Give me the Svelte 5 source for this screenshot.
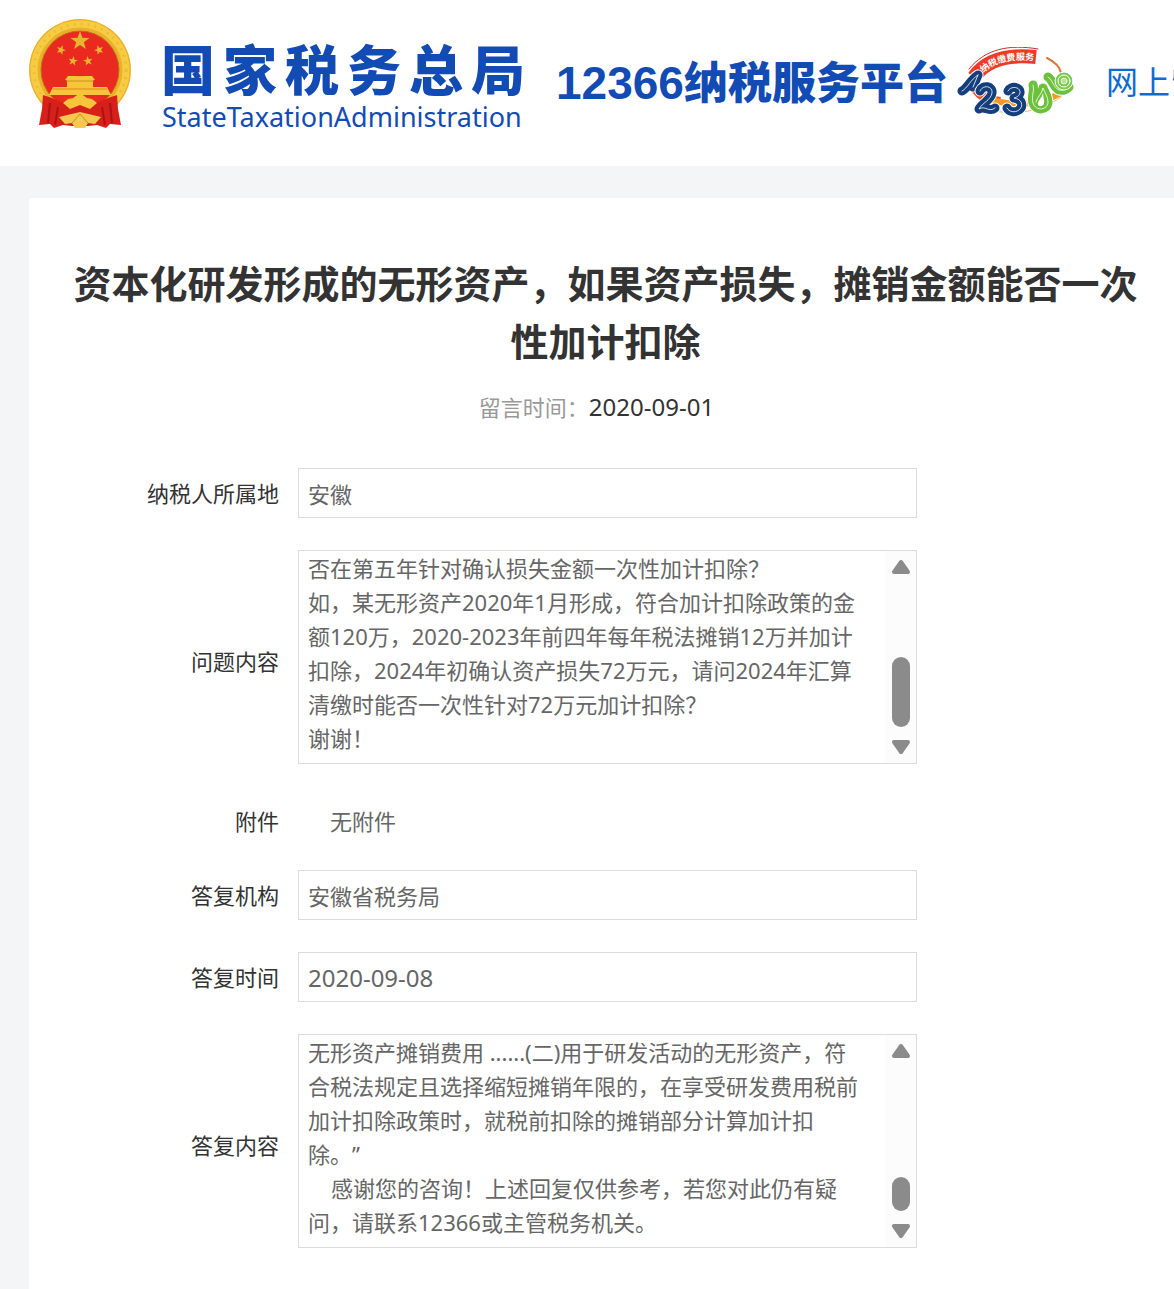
<script>
  let message = {
    title: "资本化研发形成的无形资产，如果资产损失，摊销金额能否一次性加计扣除",
    date: "2020-09-01",
    region: "安徽",
    question:
      "否在第五年针对确认损失金额一次性加计扣除？\n如，某无形资产2020年1月形成，符合加计扣除政策的金额120万，2020-2023年前四年每年税法摊销12万并加计扣除，2024年初确认资产损失72万元，请问2024年汇算清缴时能否一次性针对72万元加计扣除？\n谢谢！",
    attachment: "无附件",
    replyOrg: "安徽省税务局",
    replyDate: "2020-09-08",
    reply:
      "无形资产摊销费用 ......(二)用于研发活动的无形资产，符合税法规定且选择缩短摊销年限的，在享受研发费用税前加计扣除政策时，就税前扣除的摊销部分计算加计扣\n除。”\n    感谢您的咨询！上述回复仅供参考，若您对此仍有疑问，请联系12366或主管税务机关。",
  };

  const orgName = [..."国家税务总局"];

  // strokes of the hotline mark, painted as outline, body and highlight
  const blueDigits = [
    "M5 44C11 41 13 33 21 28M21 28 16 40",
    "M23 44C26 37 36 39 35 46C34 53 25 56 22 62C28 58 32 66 38 61",
    "M51 44C54 38 64 40 63 46C62 50 57 51 57 51C65 52 67 59 62 63C58 66 52 65 50 61",
  ];
  const greenDigits = [
    "M76 38C78 43 74 49 76 56C79 65 91 63 91 55C91 50 88 46 86 41C85 47 80 50 79 55",
    "M91 30C95 32 97 41 102 43C106 44 110 42 112 40",
  ];
</script>

{#snippet star(x, y, r, turn)}
  <path
    d="M0-10 2.4-3.2 9.5-3.1 3.8 1.2 5.9 8.1 0 4-5.9 8.1-3.8 1.2-9.5-3.1-2.4-3.2Z"
    transform="translate({x} {y}) rotate({turn}) scale({r / 10})"
    fill="#e8b62c"
  />
{/snippet}

{#snippet digit(d, color)}
  <path {d} stroke="#fff" stroke-width="11" />
  <path {d} stroke={color} stroke-width="9" />
  <path {d} stroke="#fff" stroke-width="1" opacity="0.8" />
{/snippet}

{#snippet scrollbar(size)}
  <div class="scrollbar" aria-hidden="true">
    <svg width="20" height="16" viewBox="0 0 20 16">
      <path d="M10 3 17 13H3Z" />
    </svg>
    <span class="thumb {size}"></span>
    <svg width="20" height="16" viewBox="0 0 20 16">
      <path d="M10 13 3 3H17Z" />
    </svg>
  </div>
{/snippet}

<header>
  <svg class="emblem" width="104" height="112" viewBox="0 0 104 112" role="img" aria-label="国徽">
    <circle cx="52" cy="51" r="51" fill="#eab02a" />
    <circle cx="52" cy="51" r="46" fill="none" stroke="#f7cc45" stroke-width="7" />
    <circle cx="52" cy="51" r="46" fill="none" stroke="#f0bc35" stroke-width="3" stroke-dasharray="2 5" />
    <circle cx="52" cy="51" r="39" fill="#ea2a20" stroke="#b9741a" stroke-width="1" />
    {@render star(52, 22, 10, 0)}
    {@render star(33, 31, 5, 20)}
    {@render star(71, 31, 5, -20)}
    {@render star(45, 42, 5, 10)}
    {@render star(60, 42, 5, -10)}
    <path d="M40 57H64L67 61H65V68H79L83 76H21L25 68H39V61H37Z" fill="#f6c53a" />
    <path d="M38 62H66M25 70H79" stroke="#cf8d1a" />
    <path d="M15 76C24 79 33 82 40 86H64C71 82 80 79 89 76L90 90 93 106 82 105 78 109 69 106 60 107H44L35 106 26 109 22 105 11 106 14 90Z" fill="#d8201b" />
    <path d="M22 84 20 104M30 88 27 106M74 88 77 106M82 84 84 104" stroke="#a81414" stroke-width="2" fill="none" />
    <path d="M35 84 40 80 45 79 52 74 59 79 64 80 69 84 62 90 52 86 42 90Z" fill="#f6c53a" />
    <path d="M31 98 52 93 73 98 67 105 60 104 57 109H47L44 104 37 105Z" fill="#f3c94f" />
    <path d="M44 104 52 95 60 104" stroke="#cf8d1a" fill="none" />
  </svg>
  <div class="org">
    <div class="org-name">
      {#each orgName as char}<span>{char}</span>{/each}
    </div>
    <div class="org-en">StateTaxationAdministration</div>
  </div>
  <div class="platform"><b>12366</b>纳税服务平台</div>
  <svg class="mascot" width="118" height="70" viewBox="0 0 118 70" role="img" aria-label="12366">
    <g fill="none" stroke-linecap="round" stroke-linejoin="round">
      <path d="M12 22C28 2 52-3 81 2" stroke="#c9302a" stroke-width="1" />
      <path d="M90 11C98 15 103 20 104 26" stroke="#d9763a" stroke-width="2" />
      <path d="M17 38C21 48 31 53 43 55" stroke="#ee5423" stroke-width="10" stroke-linecap="butt" />
      <path d="M38 54C62 60 84 57 104 46" stroke="#f59a1f" stroke-width="6" />
      <path d="M34 63C56 69 84 65 104 50" stroke="#f3b878" stroke-width="1" />
      <path d="M17 30C29 13 50 7 79 10" stroke="#f03a28" stroke-width="14" stroke-linecap="butt" />
      <path id="ribbon" d="M26 26C38 15 54 11 80 14" />
      {#each blueDigits as d}
        {@render digit(d, "#153f7c")}
      {/each}
      {#each greenDigits as d}
        {@render digit(d, "#6cc13c")}
      {/each}
      <path d="M86 46C85 51 80 54 81 58C84 61 88 58 87 54Z" fill="#fff" />
      <circle cx="107" cy="34" r="9" fill="#7cc94e" stroke="#fff" />
      <circle cx="107" cy="34" r="6" stroke="#fff" stroke-width="1" />
      <circle cx="107" cy="34" r="3" fill="#b5e39b" stroke="#e4f5d9" />
    </g>
    <text class="ribbon-text"><textPath href="#ribbon">纳税缴费服务</textPath></text>
  </svg>
  <nav><a href="#message">网上留言</a></nav>
</header>

<main id="message">
  <h1>{message.title}</h1>
  <p class="date">留言时间：<time>{message.date}</time></p>

  <form>
    <label for="region">纳税人所属地</label>
    <input id="region" value={message.region} readonly />

    <label class="tall" for="question">问题内容</label>
    <div class="text-box">
      <textarea id="question" rows="6" value={message.question} readonly></textarea>
      {@render scrollbar("long")}
    </div>

    <label class="tall" for="attachment">附件</label>
    <output id="attachment">{message.attachment}</output>

    <label for="reply-org">答复机构</label>
    <input id="reply-org" value={message.replyOrg} readonly />

    <label for="reply-date">答复时间</label>
    <input id="reply-date" class="date-input" value={message.replyDate} readonly />

    <label class="tall" for="reply">答复内容</label>
    <div class="text-box">
      <textarea id="reply" rows="6" value={message.reply} readonly></textarea>
      {@render scrollbar("short")}
    </div>
  </form>
</main>

<style>
  :global(body) {
    background: #f4f5f7;
    color: #333;
    font-family: "Noto Sans", "Noto Sans CJK SC", sans-serif;
    font-size: 22px;
    overflow: hidden;
  }

  header {
    display: flex;
    align-items: flex-start;
    height: 166px;
    padding-left: 28px;
    box-sizing: border-box;
    background: #fff;
    color: #134bb5;
    white-space: nowrap;
    overflow: hidden;
  }

  header > * {
    flex-shrink: 0;
  }

  .emblem {
    margin-top: 19px;
  }

  .org {
    width: 364px;
    margin: 40px 0 0 29px;
  }

  .org-name {
    display: flex;
    justify-content: space-between;
    font-size: 54px;
    font-weight: 900;
    line-height: 60px;
  }

  .org-en {
    padding-left: 1px;
    font-size: 27px;
    line-height: 34px;
  }

  .platform {
    margin: 54px 0 0 31px;
    font-size: 44px;
    font-weight: 900;
    line-height: 56px;
  }

  .platform b {
    font-family: "Liberation Sans", sans-serif;
    font-size: 46px;
  }

  .mascot {
    margin: 47px 0 0 9px;
  }

  .ribbon-text {
    fill: #fff;
    font-size: 9px;
    font-weight: 700;
  }

  nav {
    margin: 58px 0 0 31px;
    font-size: 32px;
    line-height: 48px;
  }

  nav a {
    color: #0f6bd0;
    text-decoration: none;
  }

  main {
    margin: 32px 0 0 29px;
    padding: 56px 28px 42px 36px;
    background: #fff;
  }

  h1 {
    margin: 0;
    font-size: 38px;
    line-height: 58px;
    text-align: center;
  }

  .date {
    margin: 20px 18px 44px 0;
    line-height: 34px;
    color: #999;
    text-align: center;
  }

  time {
    color: #333;
    font-size: 24px;
  }

  form {
    display: grid;
    grid-template-columns: 214px minmax(0, 619px);
    gap: 32px 19px;
    align-items: center;
  }

  label {
    text-align: right;
    line-height: 34px;
  }

  .tall {
    padding-top: 8px;
  }

  input,
  textarea,
  .text-box {
    box-sizing: border-box;
    border: 1px solid #dcdcdc;
    background: #fff;
    color: #666;
    font: inherit;
  }

  input {
    width: 100%;
    height: 50px;
    padding: 0 9px;
  }

  .date-input {
    font-size: 24px;
  }

  output {
    padding: 8px 32px 0;
    line-height: 34px;
    color: #666;
  }

  .text-box {
    display: flex;
    height: 214px;
  }

  textarea {
    flex: 1;
    min-width: 0;
    height: 100%;
    padding: 0 18px 0 9px;
    border: 0;
    line-height: 34px;
    text-spacing-trim: space-all;
    resize: none;
    overflow: hidden;
  }

  .scrollbar {
    display: flex;
    flex-direction: column;
    align-items: center;
    width: 31px;
    padding: 8px 0;
    box-sizing: border-box;
    background: #fcfcfc;
  }

  .scrollbar path {
    fill: #8b8b8b;
    stroke: #8b8b8b;
    stroke-width: 4;
    stroke-linejoin: round;
  }

  .thumb {
    width: 18px;
    margin: auto 0 12px;
    border-radius: 9px;
    background: #8b8b8b;
  }

  .long {
    height: 70px;
  }

  .short {
    height: 34px;
  }
</style>
